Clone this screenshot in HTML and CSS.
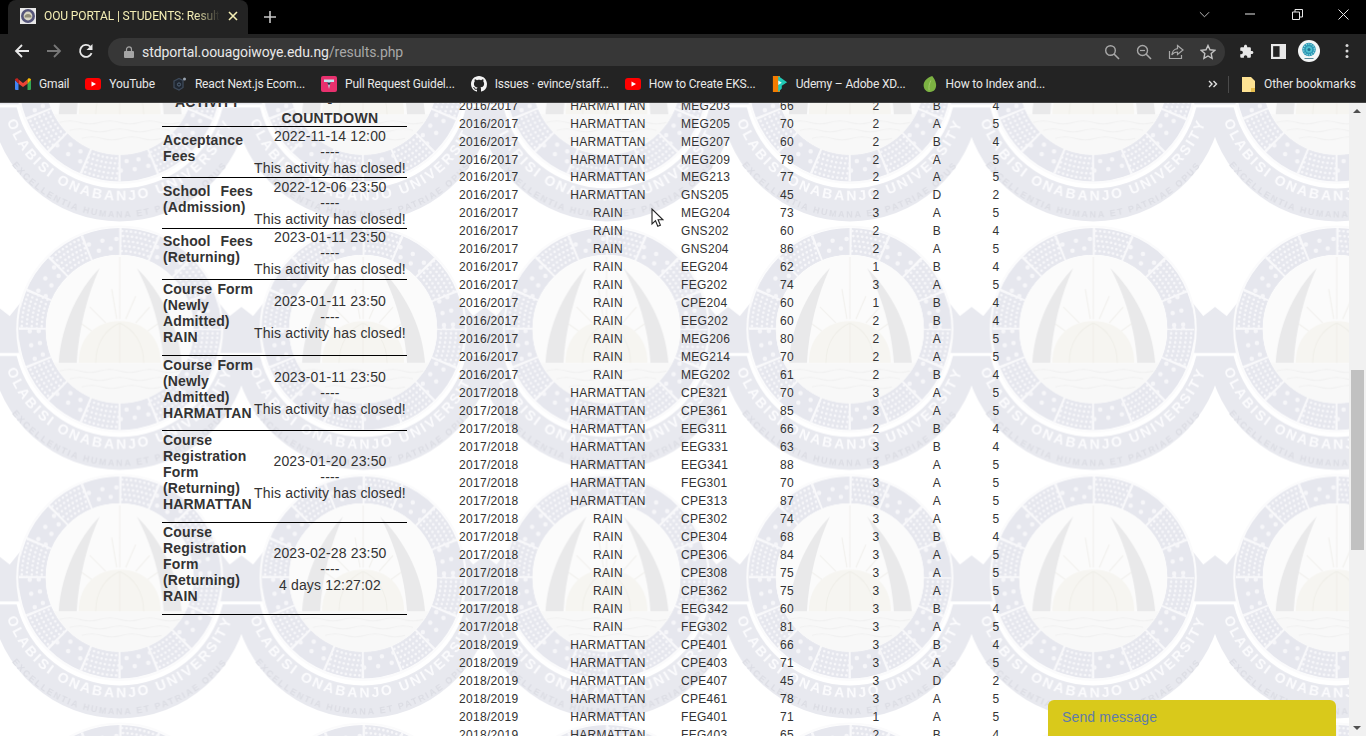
FILE: index.html
```html
<!DOCTYPE html>
<html lang="en">
<head>
<meta charset="utf-8">
<title>OOU PORTAL | STUDENTS: Results</title>
<link rel="stylesheet" href="styles.css">
</head>
<body>
<div class="browser">
  <header class="tabstrip">
    <div class="tab">
      <svg class="favicon" viewBox="0 0 16 16"><rect width="16" height="16" fill="#e8e8e8"/><circle cx="8" cy="8" r="7" fill="#55557a"/><circle cx="8" cy="8" r="4.4" fill="#d9d6c4"/><path d="M4.5 9.5a3.5 3.5 0 0 1 7 0z" fill="#8f8c78"/></svg>
      <span class="tab-title">OOU PORTAL | STUDENTS: Results</span>
      <svg class="tab-close" viewBox="0 0 10 10"><path d="M1 1l8 8M9 1l-8 8" stroke="#f5efb5" stroke-width="1.6" fill="none"/></svg>
    </div>
    <svg class="newtab" viewBox="0 0 12 12"><path d="M6 0v12M0 6h12" stroke="#c8c8c8" stroke-width="1.6"/></svg>
    <div class="winctl">
      <svg class="w-chev" viewBox="0 0 12 7"><path d="M1 1l5 5 5-5" stroke="#c8c8c8" fill="none"/></svg>
      <svg class="w-min" viewBox="0 0 10 2"><path d="M0 1h10" stroke="#e8e8e8"/></svg>
      <svg class="w-res" viewBox="0 0 11 11"><path d="M.5 3h7v7.5h-7zM3 3V.5h7.5V8H8" stroke="#e8e8e8" fill="none"/></svg>
      <svg class="w-close" viewBox="0 0 11 11"><path d="M.5.5l10 10M10.5.5l-10 10" stroke="#e8e8e8" fill="none"/></svg>
    </div>
  </header>

  <nav class="toolbar">
    <svg class="nav-ic" viewBox="0 0 16 16"><path d="M15 8H2M8 2L2 8l6 6" stroke="#e8e8e8" stroke-width="1.8" fill="none"/></svg>
    <svg class="nav-ic" viewBox="0 0 16 16"><path d="M1 8h13M8 2l6 6-6 6" stroke="#777" stroke-width="1.8" fill="none"/></svg>
    <svg class="nav-ic" viewBox="0 0 16 16"><path d="M13.6 10.2A6 6 0 1 1 12.2 3.6" stroke="#e8e8e8" stroke-width="1.8" fill="none"/><path d="M14.5 1v6h-6z" fill="#e8e8e8"/></svg>
    <div class="omnibox">
      <svg class="lock" viewBox="0 0 10 12"><path d="M2.5 5V3.4a2.5 2.5 0 0 1 5 0V5" stroke="#a5a5a5" stroke-width="1.2" fill="none"/><rect y="5" width="10" height="7" rx="1" fill="#a5a5a5"/></svg>
      <span class="url"><span class="url-host">stdportal.oouagoiwoye.edu.ng</span>/results.php</span>
      <svg class="omni-ic" viewBox="0 0 16 16"><circle cx="6.5" cy="6.5" r="4.8" stroke="#a8a8a8" stroke-width="1.4" fill="none"/><path d="M10 10l5 5" stroke="#a8a8a8" stroke-width="1.6"/></svg>
      <svg class="omni-ic" viewBox="0 0 16 16"><circle cx="6.5" cy="6.5" r="5" stroke="#a8a8a8" stroke-width="1.4" fill="none"/><path d="M10 10l5 5" stroke="#a8a8a8" stroke-width="1.6"/><path d="M4 6.5h5" stroke="#a8a8a8" stroke-width="1.2"/></svg>
      <svg class="omni-ic" viewBox="0 0 16 16"><path d="M1.5 7v7.5h12V11" stroke="#a8a8a8" stroke-width="1.2" fill="none"/><path d="M9.5 1.5L15 6l-5.500 4.500V8C7 8 5 9 3.800 11 4 7.500 6.500 5 9.500 4.700z" stroke="#a8a8a8" stroke-width="1.2" fill="none"/></svg>
      <svg class="omni-ic" viewBox="0 0 16 16"><path d="M8 1.500l2 4.300 4.700.6-3.500 3.200.9 4.700L8 12l-4.100 2.300.9-4.700L1.300 6.400 6 5.800z" stroke="#c4c4c4" stroke-width="1.4" fill="none"/></svg>
    </div>
    <svg class="tool-ic" viewBox="0 0 24 24"><path fill="#e8e8e8" d="M20.500 11H19V7c0-1.100-.9-2-2-2h-4V3.500C13 2.120 11.880 1 10.500 1S8 2.120 8 3.500V5H4c-1.100 0-1.990.9-1.990 2v3.800H3.500c1.490 0 2.700 1.210 2.700 2.700s-1.210 2.700-2.700 2.700H2V20c0 1.100.9 2 2 2h3.800v-1.500c0-1.490 1.210-2.700 2.700-2.700 1.490 0 2.700 1.210 2.700 2.700V22H17c1.100 0 2-.9 2-2v-4h1.500c1.380 0 2.500-1.120 2.500-2.500S21.880 11 20.500 11z"/></svg>
    <svg class="tool-ic tool-panel" viewBox="0 0 14 14"><rect width="14" height="14" fill="#e8e8e8"/><rect x="2" y="2" width="6" height="10" fill="#232323"/></svg>
    <svg class="avatar" viewBox="0 0 22 22"><circle cx="11" cy="11" r="11" fill="#f4f6f6"/><circle cx="11" cy="9.500" r="6.800" fill="#2b97b4"/><circle cx="11" cy="9.500" r="5.400" fill="none" stroke="#8fd6de" stroke-width="1.300" stroke-dasharray="1.200 1.200"/><circle cx="11" cy="9.500" r="3.200" fill="#4fc0cf"/><circle cx="11" cy="9.500" r="1.500" fill="#1d6f90"/><path d="M6.500 18.500h9" stroke="#5a8a98"/></svg>
    <svg class="menu" viewBox="0 0 4 16"><circle cx="2" cy="2.500" r="1.500" fill="#d8d8d8"/><circle cx="2" cy="8" r="1.500" fill="#d8d8d8"/><circle cx="2" cy="13.500" r="1.500" fill="#d8d8d8"/></svg>
  </nav>

  <nav class="bookmarks">
    <span class="bm"><svg class="bm-ic" viewBox="0 0 16 12"><path d="M0 2v9a1 1 0 0 0 1 1h2.500V5.500z" fill="#4285f4"/><path d="M16 2v9a1 1 0 0 1-1 1h-2.500V5.500z" fill="#34a853"/><path d="M12.500 1.500L8 5 3.500 1.500v4.200L8 9l4.500-3.300z" fill="#ea4335"/><path d="M0 2c0-1.500 1.700-2.300 2.800-1.400l.7.900v4.200z" fill="#c5221f"/><path d="M16 2c0-1.500-1.700-2.300-2.800-1.400l-.7.900v4.200z" fill="#fbbc04"/></svg><span>Gmail</span></span>
    <span class="bm"><svg class="bm-ic" viewBox="0 0 16 12"><rect width="16" height="12" rx="3" fill="#f00"/><path d="M6.500 3.500v5L11 6z" fill="#fff"/></svg><span>YouTube</span></span>
    <span class="bm"><svg class="bm-ic" viewBox="0 0 16 16"><path d="M3 5l5-2.500 4 2v7L8 14l-5-2.500z" stroke="#3e4a5a" stroke-width="1.300" fill="#1f2630"/><circle cx="8" cy="8.500" r="1.600" stroke="#55667a" fill="none"/><circle cx="13.500" cy="3" r="1.500" fill="#9aa4b0"/></svg><span>React Next.js Ecom...</span></span>
    <span class="bm"><svg class="bm-ic" viewBox="0 0 16 16"><rect width="16" height="16" rx="2" fill="#e8316e"/><path d="M3 3.500h10v2.500H9.500L8 13 6.500 6H3z" fill="#bfe9f0"/><path d="M6 6.500h4l-2 3z" fill="#1c2b44"/></svg><span>Pull Request Guidel...</span></span>
    <span class="bm"><svg class="bm-ic" viewBox="0 0 16 16"><path fill="#f4f4f4" d="M8 0C3.580 0 0 3.580 0 8c0 3.540 2.290 6.530 5.470 7.590.4.07.55-.17.55-.38 0-.19-.01-.82-.01-1.490-2.010.37-2.530-.49-2.690-.94-.09-.23-.48-.94-.82-1.130-.28-.15-.68-.52-.01-.53.63-.01 1.080.58 1.230.82.72 1.210 1.870.87 2.330.66.07-.52.28-.87.51-1.070-1.780-.2-3.640-.89-3.640-3.950 0-.87.31-1.590.82-2.150-.08-.2-.36-1.020.08-2.120 0 0 .67-.21 2.200.82.64-.18 1.320-.27 2-.27.68 0 1.360.09 2 .27 1.530-1.040 2.200-.82 2.200-.82.44 1.100.16 1.920.08 2.120.51.56.82 1.270.82 2.150 0 3.070-1.870 3.750-3.650 3.950.29.25.54.73.54 1.480 0 1.070-.01 1.930-.01 2.200 0 .21.15.46.55.38A8.013 8.013 0 0 0 16 8c0-4.420-3.580-8-8-8z"/></svg><span>Issues · evince/staff...</span></span>
    <span class="bm"><svg class="bm-ic" viewBox="0 0 16 12"><rect width="16" height="12" rx="3" fill="#f00"/><path d="M6.500 3.500v5L11 6z" fill="#fff"/></svg><span>How to Create EKS...</span></span>
    <span class="bm"><svg class="bm-ic" viewBox="0 0 16 18"><rect y="0" width="8" height="18" fill="#f47c00"/><path d="M6 0l10 7-6 4v3l-4 4z" fill="#20c9b6"/><path d="M6 5l4 2.500L6 10z" fill="#eafffb"/></svg><span>Udemy – Adobe XD...</span></span>
    <span class="bm"><svg class="bm-ic" viewBox="0 0 16 18"><path d="M10.500 0C4 2 0 7 1 12c.6 3.500 3.500 6 7 6 4.500 0 7.500-4 6.800-9C14.300 5 12 2 10.500 0z" fill="#7cb242"/><path d="M9 5C7 9 6.500 12 7 16" stroke="#a6cf6e" fill="none"/></svg><span>How to Index and...</span></span>
    <svg class="bm-more" viewBox="0 0 10 8"><path d="M1 1l3 3-3 3M5.500 1l3 3-3 3" stroke="#e0e0e0" stroke-width="1.400" fill="none"/></svg>
    <span class="bm-sep"></span>
    <span class="bm bm-other"><svg class="bm-folder" viewBox="0 0 13 15"><path d="M0 0h9l4 4v11H0z" fill="#fde293"/><path d="M9 11h4v4H9z" fill="#e8bf4e"/></svg><span>Other bookmarks</span></span>
  </nav>

  <div class="viewport">
    <main class="page">
      <svg class="wallpaper" aria-hidden="true" width="1349" height="633">
        <defs>
          <path id="bannerPath" d="M-120 0A120 120 0 0 0 120 0"/>
          <path id="mottoPath" d="M-137 0A137 137 0 0 0 137 0"/>
          <mask id="altA"><circle r="87.500" fill="none" stroke="#fff" stroke-width="27" stroke-dasharray="34.360 34.360"/></mask>
          <mask id="altB"><circle r="87.500" fill="none" stroke="#fff" stroke-width="27" stroke-dasharray="34.360 34.360" stroke-dashoffset="34.360"/></mask>
          <filter id="soft" x="-10%" y="-10%" width="120%" height="120%"><feGaussianBlur stdDeviation=".45"/></filter>
          <pattern id="tile" patternUnits="userSpaceOnUse" x="-2" y="121" width="243.400" height="248.500">
            <g transform="translate(121.700 105)" filter="url(#soft)">
              <path d="M-129 27A130 130 0 0 0 129 27H103A106 106 0 0 1 -103 27z" fill="#e8e9ef"/>
              <path d="M98-28L110-13 124-24V24H101zM-98-28L-110-13-124-24V24H-101z" fill="#e8e9ef"/>
              <circle r="102.500" fill="none" stroke="#fbfbfc" stroke-width="2"/>
              <circle r="87.500" fill="none" stroke="#e6e7ee" stroke-width="27"/>
              <circle r="87.500" fill="none" stroke="#f9f9fb" stroke-width="27" stroke-dasharray="2.200 32.160" stroke-dashoffset="1.100"/>
              <g mask="url(#altA)" fill="none" stroke="#f7f7fa" stroke-width="2.600" stroke-linecap="round">
                <circle r="78" stroke-dasharray="0 4.500"/>
                <circle r="83" stroke-dasharray="0 4.500"/>
                <circle r="88" stroke-dasharray="0 4.500"/>
                <circle r="93" stroke-dasharray="0 4.500"/>
                <circle r="98" stroke-dasharray="0 4.500"/>
              </g>
              <g mask="url(#altB)" fill="none" stroke="#f6f6f9" stroke-width="4.500" stroke-linecap="round">
                <circle r="81" stroke-dasharray="0 12"/>
                <circle r="90" stroke-dasharray="0 14"/>
              </g>
              <circle r="74" fill="#fbfbfb"/>
              <path d="M0-72V-10M-8-40L-3-10M16-33L6-10M-30-22L-14-6M30-22L16-6M-42-8L-28 2M42-8L28 2" stroke="#f2f1ee" stroke-width="1.200" fill="none"/>
              <path d="M-20-61C-42-38-58-5-61 34H-43C-41 0-32-35-20-61z" fill="#e9e9ea"/>
              <path d="M17-61C40-38 59-5 62 34H44C42 0 31-35 17-61z" fill="#e9e9ea"/>
              <path d="M-41 34C-41 8-24-8 0-8S41 8 41 34z" fill="#f6f5f1"/>
              <path d="M-24 34C-24 14-14 0 0 -6M24 34C24 14 14 0 0-6M0-6V34" stroke="#efeee8" fill="none"/>
              <path d="M-66 34H66A74 74 0 0 1 -66 34z" fill="#f8f8f8"/>
              <path d="M-60 42q10-3 20 0t20 0 20 0 20 0 20 0 20 0M-50 50q10-3 20 0t20 0 20 0 20 0 20 0M-38 58q10-3 20 0t20 0 20 0 20 0" stroke="#f0f0f0" fill="none"/>
              <text class="seal-banner"><textPath href="#bannerPath" startOffset="50%" text-anchor="middle">OLABISI ONABANJO UNIVERSITY</textPath></text>
              <text class="seal-motto"><textPath href="#mottoPath" startOffset="50%" text-anchor="middle">EXCELLENTIA HUMANA ET PATRIAE OPUS</textPath></text>
            </g>
          </pattern>
        </defs>
        <rect width="1349" height="633" fill="#fff"/>
        <rect width="1349" height="633" fill="url(#tile)"/>
      </svg>

      <div class="content">
        <table class="deadlines">
          <tr class="dl-head"><th>ACTIVITY</th><th>DATE<br>-<br>COUNTDOWN</th></tr>
          <tr><th>Acceptance Fees</th><td>2022-11-14 12:00<br>----<br>This activity has closed!</td></tr>
          <tr><th>School Fees (Admission)</th><td>2022-12-06 23:50<br>----<br>This activity has closed!</td></tr>
          <tr class="dl-raise dl-raise-all"><th>School Fees (Returning)</th><td>2023-01-11 23:50<br>----<br>This activity has closed!</td></tr>
          <tr class="dl-raise"><th>Course Form (Newly Admitted) RAIN</th><td>2023-01-11 23:50<br>----<br>This activity has closed!</td></tr>
          <tr class="dl-tight"><th>Course Form (Newly Admitted) HARMATTAN</th><td>2023-01-11 23:50<br>----<br>This activity has closed!</td></tr>
          <tr><th>Course Registration Form (Returning) HARMATTAN</th><td>2023-01-20 23:50<br>----<br>This activity has closed!</td></tr>
          <tr><th>Course Registration Form (Returning) RAIN</th><td>2023-02-28 23:50<br>----<br>4 days 12:27:02</td></tr>
        </table>

        <table class="results">
          <tr><td>2016/2017</td><td>HARMATTAN</td><td>MEG203</td><td>66</td><td>2</td><td>B</td><td>4</td></tr>
          <tr><td>2016/2017</td><td>HARMATTAN</td><td>MEG205</td><td>70</td><td>2</td><td>A</td><td>5</td></tr>
          <tr><td>2016/2017</td><td>HARMATTAN</td><td>MEG207</td><td>60</td><td>2</td><td>B</td><td>4</td></tr>
          <tr class="row-tight"><td>2016/2017</td><td>HARMATTAN</td><td>MEG209</td><td>79</td><td>2</td><td>A</td><td>5</td></tr>
          <tr><td>2016/2017</td><td>HARMATTAN</td><td>MEG213</td><td>77</td><td>2</td><td>A</td><td>5</td></tr>
          <tr><td>2016/2017</td><td>HARMATTAN</td><td>GNS205</td><td>45</td><td>2</td><td>D</td><td>2</td></tr>
          <tr><td>2016/2017</td><td>RAIN</td><td>MEG204</td><td>73</td><td>3</td><td>A</td><td>5</td></tr>
          <tr><td>2016/2017</td><td>RAIN</td><td>GNS202</td><td>60</td><td>2</td><td>B</td><td>4</td></tr>
          <tr><td>2016/2017</td><td>RAIN</td><td>GNS204</td><td>86</td><td>2</td><td>A</td><td>5</td></tr>
          <tr><td>2016/2017</td><td>RAIN</td><td>EEG204</td><td>62</td><td>1</td><td>B</td><td>4</td></tr>
          <tr><td>2016/2017</td><td>RAIN</td><td>FEG202</td><td>74</td><td>3</td><td>A</td><td>5</td></tr>
          <tr><td>2016/2017</td><td>RAIN</td><td>CPE204</td><td>60</td><td>1</td><td>B</td><td>4</td></tr>
          <tr><td>2016/2017</td><td>RAIN</td><td>EEG202</td><td>60</td><td>2</td><td>B</td><td>4</td></tr>
          <tr><td>2016/2017</td><td>RAIN</td><td>MEG206</td><td>80</td><td>2</td><td>A</td><td>5</td></tr>
          <tr><td>2016/2017</td><td>RAIN</td><td>MEG214</td><td>70</td><td>2</td><td>A</td><td>5</td></tr>
          <tr><td>2016/2017</td><td>RAIN</td><td>MEG202</td><td>61</td><td>2</td><td>B</td><td>4</td></tr>
          <tr><td>2017/2018</td><td>HARMATTAN</td><td>CPE321</td><td>70</td><td>3</td><td>A</td><td>5</td></tr>
          <tr><td>2017/2018</td><td>HARMATTAN</td><td>CPE361</td><td>85</td><td>3</td><td>A</td><td>5</td></tr>
          <tr><td>2017/2018</td><td>HARMATTAN</td><td>EEG311</td><td>66</td><td>2</td><td>B</td><td>4</td></tr>
          <tr><td>2017/2018</td><td>HARMATTAN</td><td>EEG331</td><td>63</td><td>3</td><td>B</td><td>4</td></tr>
          <tr><td>2017/2018</td><td>HARMATTAN</td><td>EEG341</td><td>88</td><td>3</td><td>A</td><td>5</td></tr>
          <tr><td>2017/2018</td><td>HARMATTAN</td><td>FEG301</td><td>70</td><td>3</td><td>A</td><td>5</td></tr>
          <tr><td>2017/2018</td><td>HARMATTAN</td><td>CPE313</td><td>87</td><td>3</td><td>A</td><td>5</td></tr>
          <tr><td>2017/2018</td><td>RAIN</td><td>CPE302</td><td>74</td><td>3</td><td>A</td><td>5</td></tr>
          <tr><td>2017/2018</td><td>RAIN</td><td>CPE304</td><td>68</td><td>3</td><td>B</td><td>4</td></tr>
          <tr><td>2017/2018</td><td>RAIN</td><td>CPE306</td><td>84</td><td>3</td><td>A</td><td>5</td></tr>
          <tr><td>2017/2018</td><td>RAIN</td><td>CPE308</td><td>75</td><td>3</td><td>A</td><td>5</td></tr>
          <tr><td>2017/2018</td><td>RAIN</td><td>CPE362</td><td>75</td><td>3</td><td>A</td><td>5</td></tr>
          <tr><td>2017/2018</td><td>RAIN</td><td>EEG342</td><td>60</td><td>3</td><td>B</td><td>4</td></tr>
          <tr><td>2017/2018</td><td>RAIN</td><td>FEG302</td><td>81</td><td>3</td><td>A</td><td>5</td></tr>
          <tr><td>2018/2019</td><td>HARMATTAN</td><td>CPE401</td><td>66</td><td>3</td><td>B</td><td>4</td></tr>
          <tr><td>2018/2019</td><td>HARMATTAN</td><td>CPE403</td><td>71</td><td>3</td><td>A</td><td>5</td></tr>
          <tr><td>2018/2019</td><td>HARMATTAN</td><td>CPE407</td><td>45</td><td>3</td><td>D</td><td>2</td></tr>
          <tr><td>2018/2019</td><td>HARMATTAN</td><td>CPE461</td><td>78</td><td>3</td><td>A</td><td>5</td></tr>
          <tr><td>2018/2019</td><td>HARMATTAN</td><td>FEG401</td><td>71</td><td>1</td><td>A</td><td>5</td></tr>
          <tr><td>2018/2019</td><td>HARMATTAN</td><td>FEG403</td><td>65</td><td>2</td><td>B</td><td>4</td></tr>
        </table>
      </div>

      <svg class="pointer" viewBox="0 0 13 20"><path d="M1 1v15l3.500-3.300 2.300 5.600 2.600-1.100-2.300-5.400H12z" fill="#fff" stroke="#222" stroke-width="1.100"/></svg>
      <div class="chat">Send message</div>
    </main>

    <aside class="scrollbar">
      <span class="sb-up"></span>
      <span class="sb-thumb"></span>
      <span class="sb-down"></span>
    </aside>
  </div>
</div>
</body>
</html>
```
FILE: styles.css
```css
* { box-sizing: border-box; }
html, body { margin: 0; height: 100%; overflow: hidden; background: #fff; }
body { font-family: "Liberation Sans", Arial, sans-serif; color: #333; }

.browser { display: flex; flex-direction: column; height: 736px; }

/* Tab strip */
.tabstrip { display: flex; align-items: flex-end; height: 34px; background: #000; flex: none; }
.tab { display: flex; align-items: center; width: 240px; height: 34px; margin-left: 8px; padding: 0 10px 2px 12px; background: #232323; border-radius: 8px 8px 0 0; }
.favicon { width: 16px; height: 16px; flex: none; }
.tab-title { flex: 1; margin-left: 8px; overflow: hidden; white-space: nowrap; font: 12px Roboto, sans-serif; letter-spacing: -.1px; color: #f5efb5; -webkit-mask-image: linear-gradient(90deg, #000 86%, transparent); mask-image: linear-gradient(90deg, #000 86%, transparent); }
.tab-close { width: 10px; height: 10px; flex: none; margin-left: 8px; }
.newtab { width: 12px; height: 12px; margin: 0 0 11px 16px; flex: none; }
.winctl { display: flex; align-items: center; height: 34px; margin-left: auto; align-self: flex-start; padding-bottom: 6px; }
.w-chev { width: 11px; height: 7px; margin-right: 35px; }
.w-min { width: 10px; height: 2px; margin-right: 37px; }
.w-res { width: 11px; height: 11px; margin-right: 35px; }
.w-close { width: 11px; height: 11px; margin-right: 17px; }

/* Toolbar */
.toolbar { display: flex; align-items: center; height: 34px; padding-left: 14px; background: #232323; flex: none; }
.nav-ic { width: 16px; height: 16px; margin-right: 16px; flex: none; }
.omnibox { display: flex; align-items: center; width: 1117px; height: 28px; margin: 2px 0 0 -2px; padding: 0 9px 0 16px; background: #373737; border-radius: 14px; }
.lock { width: 10px; height: 12px; flex: none; }
.url { margin-left: 8px; flex: 1; font: 14px Roboto, sans-serif; letter-spacing: -.07px; color: #a8a8a8; white-space: nowrap; }
.url-host { color: #e8e8e8; }
.omni-ic { width: 16px; height: 16px; margin-left: 16px; flex: none; }
.tool-ic { width: 15px; height: 15px; margin-left: 14px; flex: none; }
.tool-panel { margin-left: 17px; }
.avatar { width: 22px; height: 22px; margin-left: 12px; flex: none; }
.menu { width: 4px; height: 16px; margin-left: 25px; flex: none; }

/* Bookmarks */
.bookmarks { display: flex; align-items: center; gap: 16px; height: 35px; padding: 0 10px 2px 15px; background: #232323; border-bottom: 1px solid #454545; flex: none; font: 12px Roboto, sans-serif; letter-spacing: -.15px; color: #e8e8e8; white-space: nowrap; }
.bm { display: flex; align-items: center; gap: 8px; }
.bm-ic { width: 16px; height: 16px; flex: none; }
.bm-more { width: 10px; height: 8px; margin-left: auto; }
.bm-sep { width: 1px; height: 17px; background: #4a4a4a; margin-left: -6px; }
.bm-folder { width: 13px; height: 15px; flex: none; }
.bm-other { gap: 9px; margin-left: -3px; letter-spacing: 0; }

/* Page */
.viewport { display: flex; flex: 1; min-height: 0; }
.page { position: relative; flex: 1; overflow: hidden; }
.wallpaper { position: absolute; left: 0; top: 0; }
.seal-banner { font: bold 14px "Liberation Sans", sans-serif; letter-spacing: 2.400px; fill: #fbfbfd; }
.seal-motto { font: bold 9px "Liberation Sans", sans-serif; letter-spacing: 1.800px; fill: #dcdde4; }

.content { position: relative; display: flex; align-items: flex-start; padding-left: 162px; }

.deadlines { width: 245px; margin-top: -25px; flex: none; border-collapse: collapse; table-layout: fixed; font-size: 14px; line-height: 16px; }
.deadlines tr { border-bottom: 1px solid #000; }
.deadlines th:first-child { width: 91px; padding: 1px 0 10px 1px; font-weight: bold; text-align: justify; vertical-align: middle; letter-spacing: .15px; }
.deadlines td { width: 154px; padding: 1px 0; text-align: center; vertical-align: middle; white-space: nowrap; letter-spacing: .16px; }
.deadlines .dl-head th { padding: 0; text-align: center; vertical-align: middle; }
.deadlines .dl-head th + th { font-weight: bold; letter-spacing: .3px; }
.deadlines .dl-raise td { padding: 0 0 2px; }
.deadlines .dl-raise-all th:first-child { padding: 0 0 11px 1px; }
.deadlines .dl-tight th:first-child { padding-bottom: 9px; }

.results { width: 565px; margin: -6px 0 0 52px; flex: none; border-collapse: collapse; table-layout: fixed; font-size: 12px; }
.results tr { height: 18px; }
.results tr.row-tight { height: 17px; }
.results td { padding: 0; white-space: nowrap; text-align: center; letter-spacing: .3px; }
.results td:nth-child(1) { width: 81px; text-align: left; }
.results td:nth-child(2) { width: 136px; }
.results td:nth-child(3) { width: 99px; padding-left: 5px; text-align: left; }
.results td:nth-child(4) { width: 71px; padding-left: 5px; text-align: left; }
.results td:nth-child(5) { width: 60px; }
.results td:nth-child(6) { width: 62px; }
.results td:nth-child(7) { width: 56px; }

.pointer { position: absolute; left: 651px; top: 105px; width: 13px; height: 20px; }
.chat { position: absolute; right: 13px; bottom: 0; width: 288px; height: 36px; padding: 9px 14px; background: #d9c91b; border-radius: 6px 6px 0 0; font-size: 14px; line-height: 16px; letter-spacing: .15px; color: #5f7ba8; }

/* Scrollbar */
.scrollbar { position: relative; width: 17px; flex: none; background: #f1f1f1; }
.sb-thumb { display: block; width: 13px; height: 180px; margin: 267px 0 0 2px; background: #c1c1c1; }
.sb-up, .sb-down { position: absolute; left: 4px; width: 0; height: 0; border-left: 4px solid transparent; border-right: 4px solid transparent; }
.sb-up { top: 6px; border-bottom: 4px solid #505050; }
.sb-down { bottom: 6px; border-top: 4px solid #505050; }
```
